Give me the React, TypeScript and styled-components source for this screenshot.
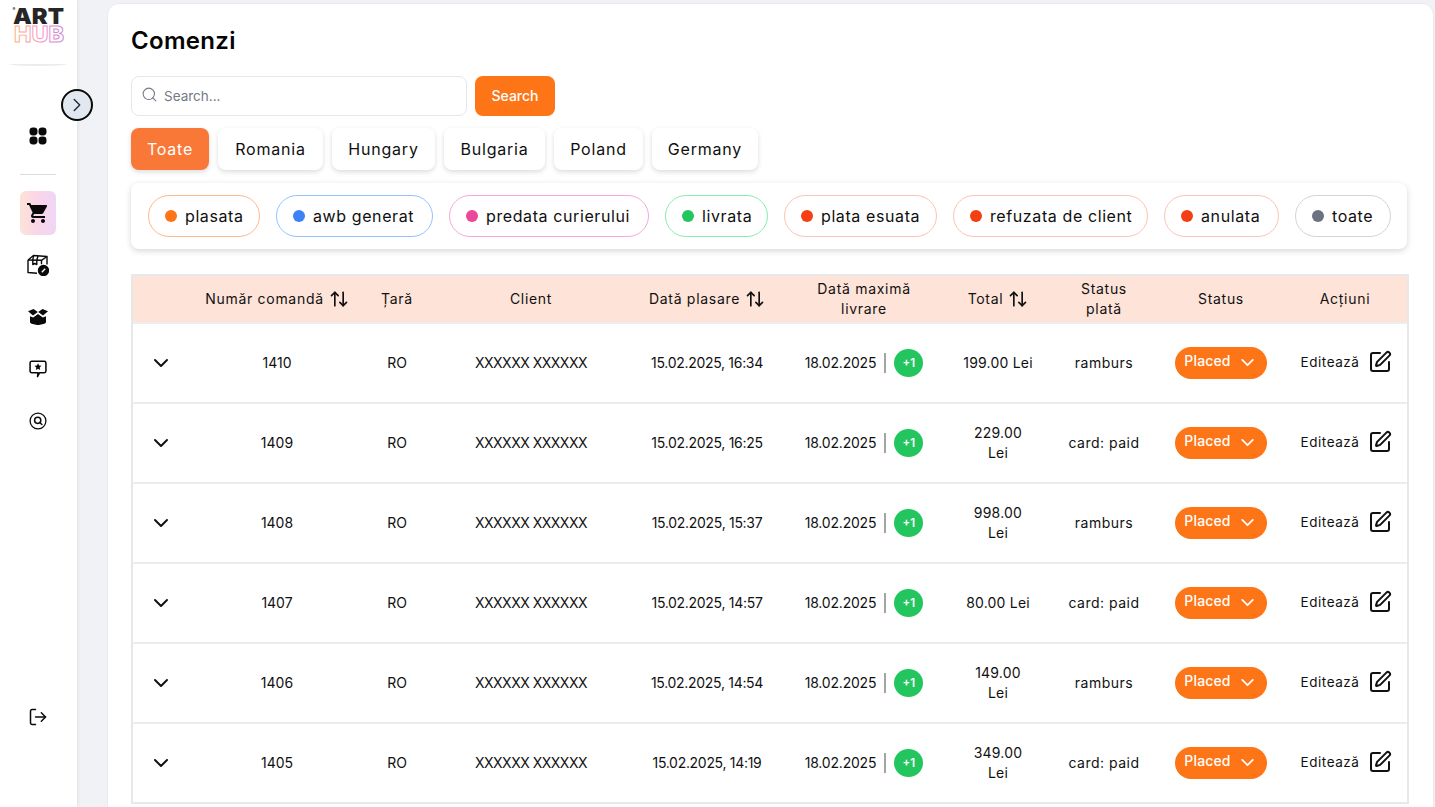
import React from 'react'
import styled, { createGlobalStyle } from 'styled-components'
import { ArrowUpDown, ChevronDown, ChevronRight, LogOut, Search, SquarePen } from 'lucide-react'
import { MdShoppingCart } from 'react-icons/md'

const GlobalStyle = createGlobalStyle`
  html, body {
    margin: 0;
    height: 100%;
    overflow: hidden;
    background: #f1f2f5;
    font-family: Inter, "Open Sans", "Liberation Sans", sans-serif;
    color: #0a0a0a;
  }
  * { box-sizing: border-box; }
`

const Shell = styled.div`
  display: flex;
  height: 807px;
  overflow: hidden;
`

const Sidebar = styled.aside`
  position: relative;
  flex: 0 0 77px;
  display: flex;
  flex-direction: column;
  align-items: center;
  background: #fff;
  box-shadow: 1px 0 3px rgba(0, 0, 0, 0.07);
  padding: 0 1px 74px 0;
`

const LogoBox = styled.div`
  height: 66px;
  width: 58px;
  border-bottom: 2px solid #ececec;
  display: flex;
  justify-content: center;
  padding-top: 4px;
  border-radius: 0 0 50% 50% / 0 0 2px 2px;
`

const Toggle = styled.button`
  position: absolute;
  left: 61px;
  top: 89px;
  width: 32px;
  height: 32px;
  border-radius: 50%;
  border: 2px solid #0a0a0a;
  background: #e2e8f0;
  display: flex;
  align-items: center;
  justify-content: center;
  padding: 0;
  color: #1f2937;
  z-index: 2;
`

const NavSlot = styled.div<{ $active?: boolean; $top?: number }>`
  width: 36px;
  height: ${p => (p.$active ? 44 : 32)}px;
  margin-top: ${p => p.$top ?? 20}px;
  border-radius: 6px;
  display: flex;
  align-items: center;
  justify-content: center;
  color: #0a0a0a;
  background: ${p => (p.$active ? 'linear-gradient(90deg, #fde3d6 0%, #fad5e8 50%, #eed6f6 100%)' : 'transparent')};
`

const NavRule = styled.div`
  width: 36px;
  height: 1px;
  background: #dcdcdc;
  margin-top: 22px;
`

const Spacer = styled.div`
  flex: 1;
`

const Main = styled.main`
  flex: 1;
  min-width: 0;
  padding: 3px 1px 0 30px;
`

const Card = styled.section`
  background: #fff;
  border: 1px solid #e9eaec;
  border-radius: 12px 12px 0 0;
  padding: 22px 24px 0 23px;
  height: 900px;
`

const Title = styled.h1`
  margin: 0;
  font-size: 24px;
  line-height: 30px;
  font-weight: 600;
  letter-spacing: 0.3px;
  color: #050505;
`

const SearchRow = styled.div`
  display: flex;
  gap: 8px;
  margin-top: 20px;
`

const SearchField = styled.div`
  width: 336px;
  height: 40px;
  border: 1px solid #e5e7eb;
  border-radius: 8px;
  display: flex;
  align-items: center;
  gap: 6px;
  padding: 0 9px;
  color: #737a86;
  font-size: 13.5px;
  & > svg {
    margin-top: -4px;
  }
`

const SearchButton = styled.button`
  width: 80px;
  height: 40px;
  border: none;
  border-radius: 8px;
  background: #fd7516;
  color: #fff;
  font: inherit;
  font-size: 14px;
  font-weight: 500;
  padding: 0 0 2px;
`

const TabRow = styled.div`
  display: flex;
  gap: 9px;
  margin-top: 12px;
`

const Tab = styled.div<{ $active?: boolean; $w: number }>`
  width: ${p => p.$w}px;
  height: 42px;
  border-radius: 8px;
  display: flex;
  align-items: center;
  justify-content: center;
  font-size: 16px;
  letter-spacing: 0.8px;
  background: ${p => (p.$active ? '#f97737' : '#fff')};
  color: ${p => (p.$active ? '#fff' : '#0f0f0f')};
  box-shadow: 0 2px 5px rgba(0, 0, 0, 0.14);
`

const FilterPanel = styled.div`
  width: 1276px;
  height: 66px;
  margin-top: 13px;
  border-radius: 8px;
  background: #fff;
  box-shadow: 0 2px 6px rgba(0, 0, 0, 0.16);
  display: flex;
  align-items: center;
  gap: 16px;
  padding: 0 17px;
`

const Pill = styled.div<{ $color: string; $line: string; $w: number }>`
  width: ${p => p.$w}px;
  height: 42px;
  flex: none;
  border-radius: 21px;
  border: 1px solid ${p => p.$line};
  display: flex;
  align-items: center;
  gap: 8px;
  padding-left: 16px;
  font-size: 16px;
  letter-spacing: 0.6px;
  white-space: nowrap;
  color: #0f0f0f;
  &::before {
    content: '';
    flex: none;
    width: 12px;
    height: 12px;
    border-radius: 50%;
    background: ${p => p.$color};
  }
`

const Table = styled.div`
  width: 1278px;
  margin-top: 25px;
  border: 2px solid #e7e8ea;
`

const COLS = '56px 176px 64px 204px 148px 166px 102px 110px 124px 124px'

const HeadRow = styled.div`
  display: grid;
  grid-template-columns: ${COLS};
  height: 46px;
  background: #fde3d8;
  align-items: center;
  text-align: center;
  font-size: 14px;
  line-height: 20px;
  font-weight: 400;
  letter-spacing: 0.7px;
  color: #111;
`

const HeadCell = styled.div`
  display: flex;
  align-items: center;
  justify-content: center;
  gap: 5px;
`

const Row = styled.div`
  display: grid;
  grid-template-columns: ${COLS};
  height: 80px;
  align-items: center;
  text-align: center;
  font-size: 14px;
  line-height: 20px;
  color: #111;
  border-top: 2px solid #eceded;
  &:first-of-type {
    border-top: 1px solid #eceded;
  }
`

const Cell = styled.div<{ $track?: number }>`
  display: flex;
  align-items: center;
  justify-content: center;
  letter-spacing: ${p => p.$track ?? 0}px;
`

const TotalCell = styled(Cell)<{ $wrap?: boolean }>`
  padding: 0 ${p => (p.$wrap ? 24 : 0)}px;
  white-space: ${p => (p.$wrap ? 'normal' : 'nowrap')};
`

const MaxDate = styled.span`
  padding-right: 8px;
  margin-right: 8px;
  border-right: 2px solid #a3a3a3;
  line-height: 20px;
  letter-spacing: -0.2px;
`

const PlusBadge = styled.span`
  width: 29px;
  height: 28px;
  border-radius: 50%;
  background: #22c55e;
  color: #fff;
  font-size: 11.5px;
  font-weight: 600;
  display: flex;
  align-items: center;
  justify-content: center;
`

const StatusBadge = styled.div`
  width: 92px;
  height: 32px;
  border-radius: 16px;
  background: #fd7516;
  color: #fff;
  display: flex;
  align-items: center;
  justify-content: center;
  gap: 6px;
  font-size: 14px;
  font-weight: 500;
  letter-spacing: 0.15px;
  padding-bottom: 4px;
  & > svg {
    margin-top: 3px;
  }
`

const EditAction = styled.div`
  display: flex;
  align-items: center;
  gap: 9px;
  font-size: 13.5px;
  font-weight: 400;
  letter-spacing: 0.55px;
  margin-left: 3px;
  margin-top: -3px;
`

const LogoMark = () => (
  <svg width="56" height="44" viewBox="0 0 56 44">
    <defs>
      <linearGradient id="hub" x1="0" x2="1" y1="0" y2="0">
        <stop offset="0" stopColor="#fdae78" />
        <stop offset="0.55" stopColor="#f58fc8" />
        <stop offset="1" stopColor="#c583cf" />
      </linearGradient>
    </defs>
    <circle cx="4" cy="4.500" r="1.400" fill="#8a8a8a" />
    <text x="3" y="20" fontFamily="Inter, sans-serif" fontWeight="900" fontSize="22" fill="#262626" textLength="51" lengthAdjust="spacingAndGlyphs">ART</text>
    <text x="4" y="38" fontFamily="Inter, sans-serif" fontWeight="800" fontSize="22" fill="#fff" stroke="url(#hub)" strokeWidth="0.9" textLength="50" lengthAdjust="spacingAndGlyphs">HUB</text>
  </svg>
)

const GridIcon = () => (
  <svg width="18" height="18" viewBox="0 0 18 18" fill="#0a0a0a">
    <rect x="0.5" y="0.5" width="8" height="8" rx="3.4" />
    <rect x="9.5" y="0.5" width="8" height="8" rx="3.4" />
    <rect x="0.5" y="9.5" width="8" height="8" rx="3.4" />
    <rect x="9.5" y="9.5" width="8" height="8" rx="3.4" />
  </svg>
)

const BoxCheckIcon = () => (
  <svg width="22" height="22" viewBox="0 0 22 22" fill="none" stroke="#0a0a0a" strokeWidth="1.4" strokeLinejoin="round">
    <path d="M1 6l5.500-4.500L20 2.500v8" />
    <path d="M1 6v12.500l9 .8" />
    <path d="M1 6l13.500.3L20 2.500M14.500 6.300v4" />
    <path d="M6.500 1.500L5.800 6.200v4.300l2-1 2 1V6.200l1.200-4.400" />
    <circle cx="16.500" cy="16.500" r="5" fill="#0a0a0a" />
    <path d="M14.800 18.200l3.400-3.400" stroke="#fff" strokeWidth="1.400" />
  </svg>
)

const OpenBoxIcon = () => (
  <svg width="20" height="16" viewBox="0 0 20 16" fill="#0a0a0a">
    <path d="M0 2.200L5.500 0l4.300 3L5 6.400z" />
    <path d="M20 2.200L14.500 0l-4.300 3L15 6.400z" />
    <path d="M2 7.200l3.200 1.200L10 5l4.800 3.400L18 7.200v5.600c0 1-.6 1.600-1.600 1.900L11 16H9l-5.400-1.300C2.600 14.400 2 13.800 2 12.800z" />
  </svg>
)

const StarChatIcon = () => (
  <svg width="18" height="18" viewBox="0 0 20 20" fill="none" stroke="#0a0a0a" strokeWidth="1.700" strokeLinejoin="round">
    <path d="M3 1.500h14a1.800 1.800 0 0 1 1.800 1.800v9a1.800 1.800 0 0 1-1.800 1.800h-5.200L9.500 18.500l.5-4.400H3a1.800 1.800 0 0 1-1.800-1.800v-9A1.800 1.800 0 0 1 3 1.500z" />
    <path d="M10 3.700l1.200 2.500 2.700.3-2 1.900.5 2.700-2.400-1.300-2.400 1.300.5-2.700-2-1.900 2.700-.3z" fill="#0a0a0a" stroke="none" />
  </svg>
)

const SearchCircleIcon = () => (
  <svg width="18" height="18" viewBox="0 0 18 18" fill="none" stroke="#0a0a0a" strokeWidth="1.300" strokeLinecap="round">
    <circle cx="9" cy="9" r="7.900" />
    <circle cx="8.700" cy="8.300" r="3.100" strokeWidth="1.500" />
    <path d="M11 10.700l1.900 1.800" strokeWidth="1.500" />
  </svg>
)

const SortIcon = () => <ArrowUpDown size={20} strokeWidth={2} color="#111" />

const tabs = [
  { label: 'Toate', w: 78, active: true },
  { label: 'Romania', w: 105 },
  { label: 'Hungary', w: 103 },
  { label: 'Bulgaria', w: 101 },
  { label: 'Poland', w: 89 },
  { label: 'Germany', w: 106 },
]

const pills = [
  { label: 'plasata', w: 112, color: '#fd7516', line: '#fdba8c' },
  { label: 'awb generat', w: 157, color: '#3b82f6', line: '#93c5fd' },
  { label: 'predata curierului', w: 200, color: '#ec4899', line: '#f9a8d4' },
  { label: 'livrata', w: 103, color: '#22c55e', line: '#86efac' },
  { label: 'plata esuata', w: 153, color: '#f43f15', line: '#fcc4b4' },
  { label: 'refuzata de client', w: 195, color: '#f43f15', line: '#fcc4b4' },
  { label: 'anulata', w: 115, color: '#f43f15', line: '#fcc4b4' },
  { label: 'toate', w: 96, color: '#6b7280', line: '#d1d5db' },
]

const orders = [
  { id: 1410, date: '15.02.2025, 16:34', total: '199.00 Lei', pay: 'ramburs', wrap: false },
  { id: 1409, date: '15.02.2025, 16:25', total: '229.00 Lei', pay: 'card: paid', wrap: true },
  { id: 1408, date: '15.02.2025, 15:37', total: '998.00 Lei', pay: 'ramburs', wrap: true },
  { id: 1407, date: '15.02.2025, 14:57', total: '80.00 Lei', pay: 'card: paid', wrap: false },
  { id: 1406, date: '15.02.2025, 14:54', total: '149.00 Lei', pay: 'ramburs', wrap: true },
  { id: 1405, date: '15.02.2025, 14:19', total: '349.00 Lei', pay: 'card: paid', wrap: true },
]

export default function App() {
  return (
    <>
      <GlobalStyle />
      <Shell>
        <Sidebar>
          <LogoBox><LogoMark /></LogoBox>
          <Toggle><ChevronRight size={22} strokeWidth={1.5} /></Toggle>
          <NavSlot $top={54}><GridIcon /></NavSlot>
          <NavRule />
          <NavSlot $active $top={16}><MdShoppingCart size={24} /></NavSlot>
          <NavSlot $top={14}><BoxCheckIcon /></NavSlot>
          <NavSlot><OpenBoxIcon /></NavSlot>
          <NavSlot><StarChatIcon /></NavSlot>
          <NavSlot><SearchCircleIcon /></NavSlot>
          <Spacer />
          <NavSlot><LogOut size={20} strokeWidth={1.8} /></NavSlot>
        </Sidebar>
        <Main>
          <Card>
            <Title>Comenzi</Title>
            <SearchRow>
              <SearchField>
                <Search size={17} strokeWidth={1.5} />
                Search...
              </SearchField>
              <SearchButton>Search</SearchButton>
            </SearchRow>
            <TabRow>
              {tabs.map(t => (
                <Tab key={t.label} $w={t.w} $active={t.active}>{t.label}</Tab>
              ))}
            </TabRow>
            <FilterPanel>
              {pills.map(p => (
                <Pill key={p.label} $w={p.w} $color={p.color} $line={p.line}>{p.label}</Pill>
              ))}
            </FilterPanel>
            <Table>
              <HeadRow>
                <div />
                <HeadCell>Număr comandă <SortIcon /></HeadCell>
                <HeadCell>Țară</HeadCell>
                <HeadCell>Client</HeadCell>
                <HeadCell>Dată plasare <SortIcon /></HeadCell>
                <HeadCell>Dată maximă<br />livrare</HeadCell>
                <HeadCell>Total <SortIcon /></HeadCell>
                <HeadCell>Status<br />plată</HeadCell>
                <HeadCell>Status</HeadCell>
                <HeadCell>Acțiuni</HeadCell>
              </HeadRow>
              {orders.map(o => (
                <Row key={o.id}>
                  <Cell><ChevronDown size={24} strokeWidth={2} /></Cell>
                  <Cell>{o.id}</Cell>
                  <Cell>RO</Cell>
                  <Cell $track={-0.5}>XXXXXX XXXXXX</Cell>
                  <Cell $track={-0.3}>{o.date}</Cell>
                  <Cell><MaxDate>18.02.2025</MaxDate><PlusBadge>+1</PlusBadge></Cell>
                  <TotalCell $wrap={o.wrap} $track={0.2}>{o.total}</TotalCell>
                  <Cell $track={0.5}>{o.pay}</Cell>
                  <Cell><StatusBadge>Placed <ChevronDown size={21} strokeWidth={2} /></StatusBadge></Cell>
                  <Cell><EditAction>Editează <SquarePen size={24} strokeWidth={2} /></EditAction></Cell>
                </Row>
              ))}
            </Table>
          </Card>
        </Main>
      </Shell>
    </>
  )
}
